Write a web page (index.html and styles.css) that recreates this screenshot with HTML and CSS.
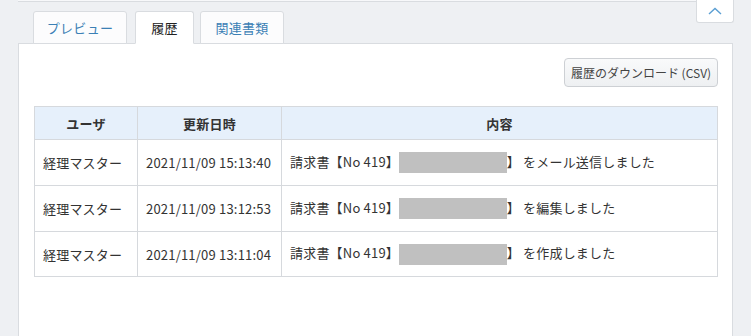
FILE: index.html
```html
<!DOCTYPE html>
<html lang="ja">
<head>
    <meta charset="UTF-8">
    <title>履歴</title>
    <link rel="stylesheet" href="styles.css">
</head>
<body>

    <!-- bottom edge of the panel above -->
    <div class="prev-panel">
        <button class="collapse" type="button" aria-label="閉じる">
            <svg width="14" height="8" viewBox="0 0 14 8"><path d="M1 7 L7 1.5 L13 7" fill="none" stroke="#5b9fd3" stroke-width="1.4"/></svg>
        </button>
    </div>

    <!-- Tabs -->
    <div class="tabs">
        <div class="tab tab-preview">プレビュー</div>
        <div class="tab tab-history active">履歴</div>
        <div class="tab tab-docs">関連書類</div>
    </div>

    <div class="panel">
        <div class="toolbar">
            <button class="btn" type="button">履歴のダウンロード (CSV)</button>
        </div>

        <table class="history">
            <thead>
                <tr>
                    <th class="col-user">ユーザ</th>
                    <th class="col-date">更新日時</th>
                    <th>内容</th>
                </tr>
            </thead>
            <tbody>
                <tr>
                    <td>経理マスター</td>
                    <td>2021/11/09 15:13:40</td>
                    <td>請求書【No 419】【<span class="redact"></span>】 をメール送信しました</td>
                </tr>
                <tr>
                    <td>経理マスター</td>
                    <td>2021/11/09 13:12:53</td>
                    <td>請求書【No 419】【<span class="redact"></span>】 を編集しました</td>
                </tr>
                <tr>
                    <td>経理マスター</td>
                    <td>2021/11/09 13:11:04</td>
                    <td>請求書【No 419】【<span class="redact"></span>】 を作成しました</td>
                </tr>
            </tbody>
        </table>
    </div>

</body>
</html>
```

FILE: styles.css
```css
body {
    margin: 0;
    padding: 0 18px;
    background-color: #eef0f3;
    font-family: "Noto Sans CJK JP", "Noto Sans", sans-serif;
    font-size: 13px;
    color: #333;
    overflow: hidden;
}

.prev-panel {
    position: relative;
    height: 1px;
    background-color: #f7f8fa;
    border-bottom: 1px solid #d9dce0;
}

.collapse {
    position: absolute;
    top: 0;
    right: -1px;
    width: 38px;
    height: 23px;
    padding: 0;
    background-color: #fff;
    border: 1px solid #d9dce0;
    border-top: none;
    border-radius: 0 0 3px 3px;
    display: flex;
    align-items: center;
    justify-content: center;
}

/* Tabs */
.tabs {
    display: flex;
    padding: 9px 0 0 15px;
    margin-bottom: -1px;
}

.tab {
    box-sizing: border-box;
    height: 33px;
    line-height: 31px;
    background-color: #fcfcfd;
    border: 1px solid #d9dce0;
    border-radius: 3px 3px 0 0;
    color: #3b80b5;
    text-align: center;
    white-space: nowrap;
    letter-spacing: 0.3px;
}

.tab-preview {
    width: 94px;
    margin-right: 8px;
}

.tab-history {
    width: 59px;
    margin-right: 6px;
}

.tab-docs {
    width: 84px;
}

.tab.active {
    background-color: #fff;
    border-bottom-color: #fff;
    color: #222;
    position: relative;
    z-index: 1;
}

/* Panel */
.panel {
    background-color: #fff;
    border: 1px solid #d9dce0;
    border-bottom: none;
    padding: 14px 14px 0 15px;
    height: 278px;
}

.toolbar {
    display: flex;
    justify-content: flex-end;
}

.btn {
    font-family: inherit;
    font-size: 12px;
    color: #444;
    height: 29px;
    width: 154px;
    padding: 0;
    background: linear-gradient(#f9fafb, #eef0f2);
    border: 1px solid #cdd0d4;
    border-radius: 4px;
}

table.history {
    width: 100%;
    margin-top: 19px;
    border-collapse: collapse;
    letter-spacing: 0.2px;
}

.history th, .history td {
    border: 1px solid #d6d9dd;
    padding: 0 8px;
    text-align: left;
    white-space: nowrap;
}

.history th {
    height: 32px;
    background-color: #e6f0fb;
    text-align: center;
    font-weight: bold;
    color: #333;
}

.history td {
    height: 45px;
}

.history tbody tr:last-child td {
    height: 44px;
}

.history .col-user {
    width: 86px;
}

.history .col-date {
    width: 127px;
}

.redact {
    display: inline-block;
    width: 108px;
    height: 21px;
    margin-left: -7px;
    vertical-align: middle;
    background-color: #c0c0c0;
}
```
